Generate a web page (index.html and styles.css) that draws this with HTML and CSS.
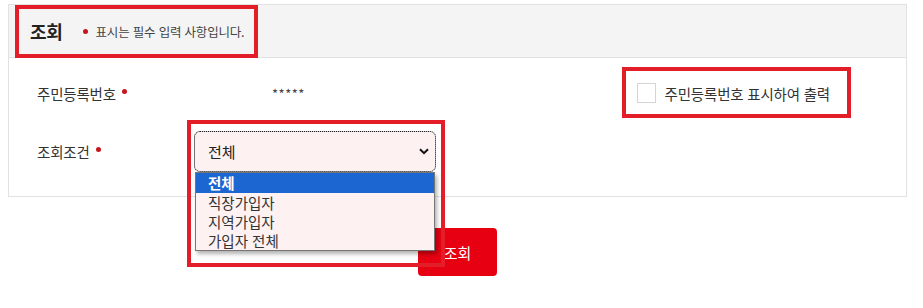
FILE: index.html
```html
<!DOCTYPE html>
<html lang="ko">
<head>
<meta charset="utf-8">
<title>조회</title>
<link rel="stylesheet" href="styles.css">
</head>
<body>
<div class="page">
  <section class="panel">
    <header class="panel-head">
      <h2 class="title">조회</h2>
      <p class="note"><span class="dot"></span>표시는 필수 입력 사항입니다.</p>
    </header>
    <div class="panel-body">
      <div class="row">
        <div class="label">주민등록번호 <span class="dot"></span></div>
        <div class="value masked">*****</div>
        <label class="check">
          <span class="box"></span>
          <span>주민등록번호 표시하여 출력</span>
        </label>
      </div>
      <div class="row">
        <div class="label">조회조건 <span class="dot"></span></div>
        <div class="select-wrap">
          <div class="select">
            <span>전체</span>
            <svg class="chev" width="10" height="7" viewBox="0 0 10 7"><path d="M1 1.2 L5 5.2 L9 1.2" fill="none" stroke="#111" stroke-width="2"/></svg>
          </div>
          <ul class="options">
            <li class="opt active">전체</li>
            <li class="opt">직장가입자</li>
            <li class="opt">지역가입자</li>
            <li class="opt">가입자 전체</li>
          </ul>
        </div>
      </div>
    </div>
  </section>
  <div class="actions">
    <button class="btn">조회</button>
  </div>
  <div class="mark mark-head"></div>
  <div class="mark mark-check"></div>
  <div class="mark mark-select"></div>
</div>
</body>
</html>
```
FILE: styles.css
```css
* { box-sizing: border-box; }
html, body { margin: 0; padding: 0; background: #fff; }
body {
  font-family: "Noto Sans CJK KR", "Noto Sans", sans-serif;
  color: #333;
}
.page {
  position: relative;
  width: 923px;
  height: 308px;
  padding: 4px 16px 0 8px;
}
.panel {
  border: 1px solid #e2e2e2;
  width: 899px;
}
.panel-head {
  height: 53px;
  background: #f4f4f4;
  border-bottom: 1px solid #e2e2e2;
  display: flex;
  align-items: center;
  padding-left: 21px;
}
.title {
  margin: 0;
  font-size: 18px;
  font-weight: 700;
  color: #222;
  letter-spacing: -0.3px;
}
.note {
  margin: 0 0 0 20px;
  font-size: 12.5px;
  color: #444;
  display: flex;
  align-items: center;
  letter-spacing: -0.2px;
}
.note .dot { margin-right: 8px; }
.dot {
  display: inline-block;
  width: 5px;
  height: 5px;
  border-radius: 50%;
  background: #c4161c;
  vertical-align: middle;
}
.panel-body {
  padding: 13px 0 23px 28px;
  display: flex;
  flex-direction: column;
  gap: 14px;
}
.row {
  display: flex;
  align-items: center;
  height: 44px;
}
.label {
  width: 157px;
  font-size: 14.5px;
  color: #333;
  display: flex;
  align-items: center;
  gap: 6px;
  letter-spacing: -0.2px;
}
.label .dot { position: relative; top: -2px; }
.masked {
  margin-left: 78px;
  font-size: 13px;
  color: #444;
  letter-spacing: 0.5px;
}
.check {
  margin-left: auto;
  margin-right: 76px;
  display: flex;
  align-items: center;
  gap: 9px;
  font-size: 14.5px;
  color: #333;
  letter-spacing: -0.2px;
}
.check .box {
  width: 19px;
  height: 20px;
  border: 1px solid #d4d4d4;
  background: #fff;
  display: inline-block;
}
.select-wrap {
  position: relative;
  width: 242px;
}
.select {
  height: 41px;
  border: 1px solid #c9c2c2;
  border-radius: 6px;
  outline: 1px dotted #222;
  outline-offset: -1px;
  background: #fdf1f1;
  display: flex;
  align-items: center;
  justify-content: space-between;
  padding: 0 6px 0 13px;
  font-size: 15px;
  color: #222;
}
.chev { margin-top: 1px; }
.options {
  position: absolute;
  top: 41px;
  left: 1px;
  width: 240px;
  margin: 0;
  padding: 0;
  list-style: none;
  background: #fdf1f1;
  border: 1px solid #767676;
  box-shadow: 2px 3px 4px rgba(0,0,0,0.3);
  z-index: 2;
}
.opt {
  height: 19px;
  line-height: 19px;
  padding-left: 12px;
  font-size: 14.5px;
  color: #333;
}
.opt.active {
  background: #1b66d1;
  color: #fff;
  font-weight: 700;
  height: 20px;
  line-height: 20px;
}
.actions {
  display: flex;
  justify-content: center;
  padding-top: 31px;
  width: 899px;
}
.btn {
  width: 79px;
  height: 48px;
  border: 0;
  border-radius: 4px;
  background: #e60012;
  color: #fff;
  font-family: inherit;
  font-size: 15px;
  padding: 0;
}
.mark {
  position: absolute;
  border: 4px solid #e31e28;
  z-index: 3;
}
.mark-head { left: 15px; top: 5px; width: 243px; height: 53px; }
.mark-check { left: 622px; top: 67px; width: 229px; height: 51px; }
.mark-select { left: 187px; top: 120px; width: 258px; height: 147px; }
```
